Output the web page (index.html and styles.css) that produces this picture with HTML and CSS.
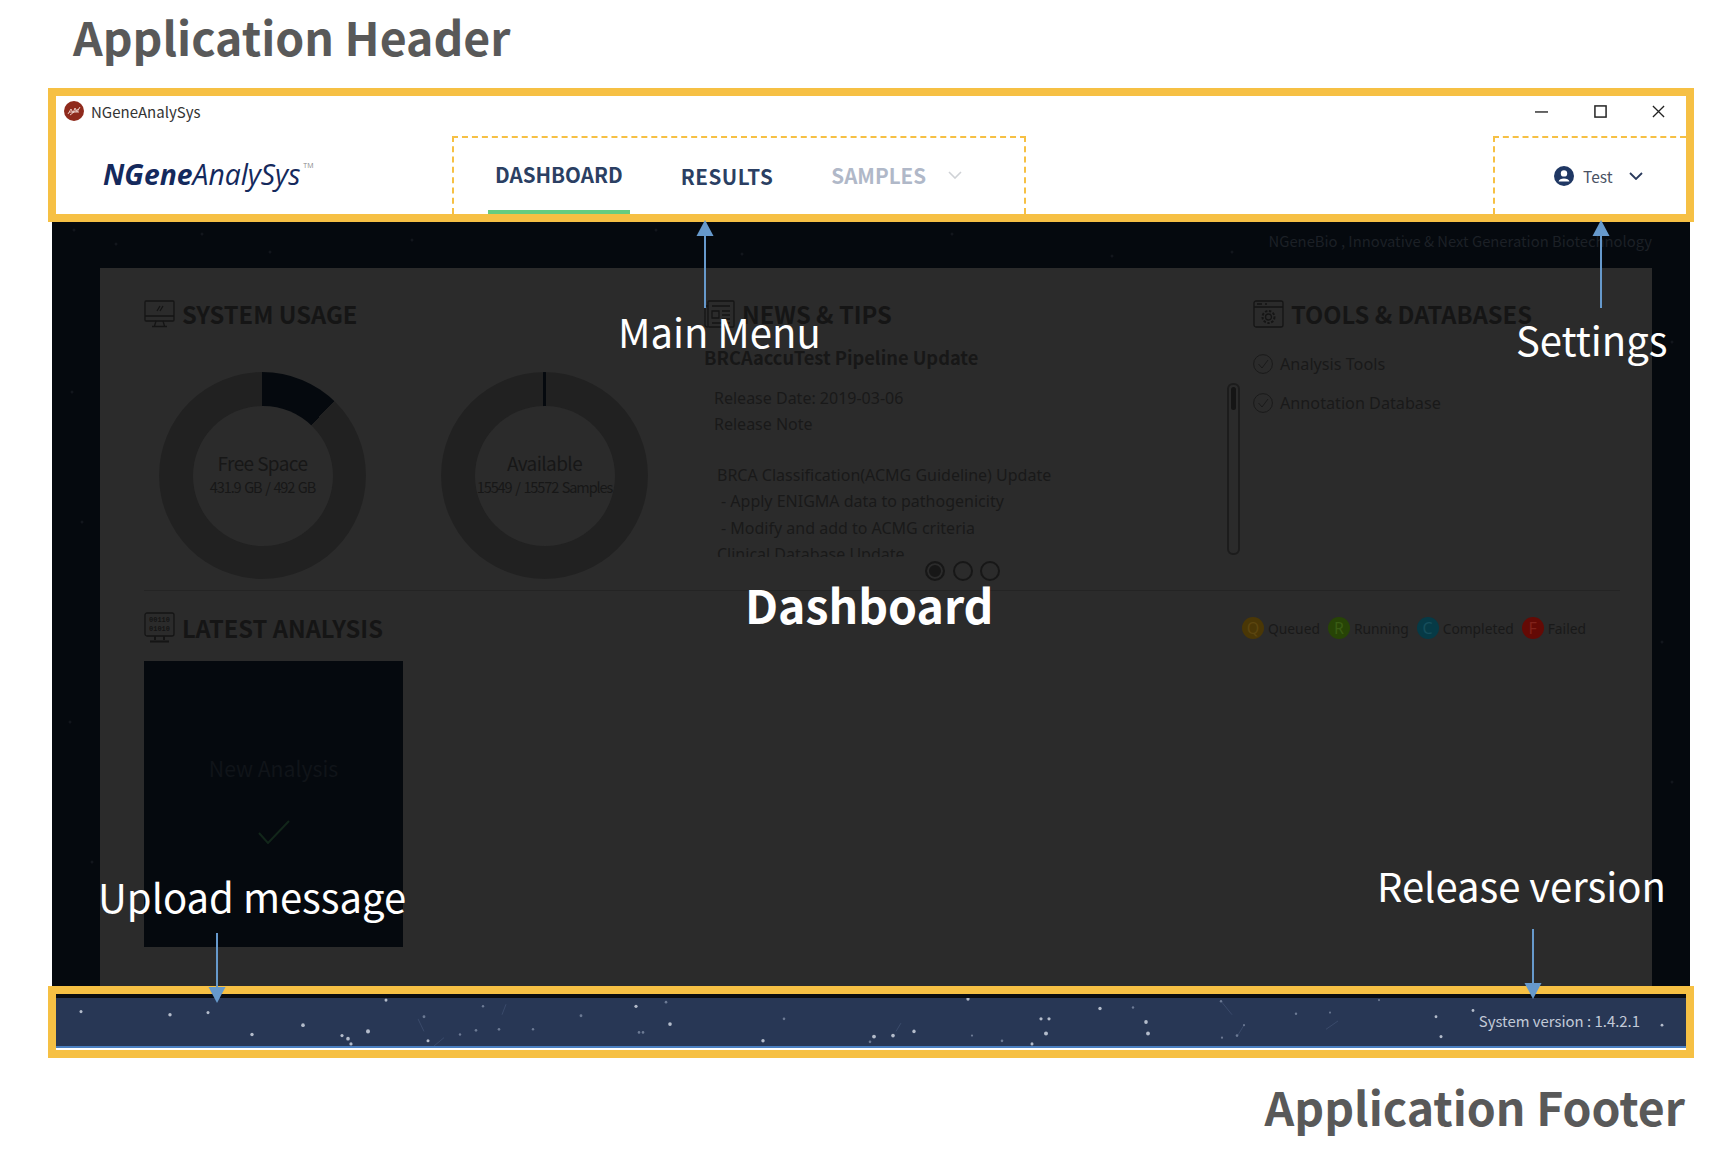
FILE: index.html
```html
<!DOCTYPE html>
<html lang="en">
<head>
  <meta charset="UTF-8" />
  <title>NGeneAnalySys - Application layout</title>
  <link rel="stylesheet" href="styles.css">
</head>
<body>
<div class="page">

  <h1 class="page-title">Application Header</h1>

  <!-- Application header -->
  <header class="app-header">
    <div class="titlebar">
      <div class="titlebar-name">
        <svg class="app-icon" viewBox="0 0 20 20">
          <circle cx="10" cy="10" r="10" fill="#8f2a1c"/>
          <path d="M4 13 L7 8 L9 12 L11 7 L13 11 L16 6 M5 11 H15 M6 14 C9 12 12 9 15 8" fill="none" stroke="#e9c9c2" stroke-width="1"/>
        </svg>
        <span>NGeneAnalySys</span>
      </div>
      <div class="window-btns">
        <svg viewBox="0 0 14 14"><path d="M0 7.5 H14" stroke="#333" stroke-width="1.6"/></svg>
        <svg viewBox="0 0 14 14"><rect x="1" y="1" width="12" height="12" fill="none" stroke="#222" stroke-width="1.6"/></svg>
        <svg viewBox="0 0 14 14"><path d="M1 1 L13 13 M13 1 L1 13" stroke="#222" stroke-width="1.4"/></svg>
      </div>
    </div>
    <div class="header-row">
      <div class="logo"><b>NGene</b>AnalySys<sup>TM</sup></div>
      <nav class="main-menu">
        <a href="#" class="active">DASHBOARD</a>
        <a href="#" class="results">RESULTS</a>
        <a href="#" class="disabled">SAMPLES
          <svg class="chevron" viewBox="0 0 14 8"><path d="M1 1 L7 7 L13 1" fill="none" stroke="#cfd2d6" stroke-width="1.6"/></svg>
        </a>
      </nav>
      <div class="settings">
        <svg class="avatar" viewBox="0 0 20 20">
          <circle cx="10" cy="10" r="10" fill="#1f3763"/>
          <circle cx="10" cy="7.4" r="3.2" fill="#fff"/>
          <path d="M4.6 15.5 C5 11.5 15 11.5 15.4 15.5 Z" fill="#fff"/>
        </svg>
        <span>Test</span>
        <svg class="chevron" viewBox="0 0 14 8"><path d="M1 1 L7 7 L13 1" fill="none" stroke="#2a3a5c" stroke-width="1.8"/></svg>
      </div>
    </div>
  </header>

  <!-- Dimmed dashboard -->
  <main class="dashboard">
    <svg class="sky" viewBox="0 0 1638 764">
      <g fill="#12161c">
        <circle cx="22" cy="8" r="1.5"/><circle cx="64" cy="22" r="1.5"/><circle cx="150" cy="12" r="1.5"/>
        <circle cx="218" cy="30" r="1.5"/><circle cx="360" cy="18" r="1.5"/><circle cx="604" cy="8" r="1.5"/>
        <circle cx="690" cy="32" r="1.5"/><circle cx="900" cy="12" r="1.5"/><circle cx="1060" cy="34" r="1.5"/>
        <circle cx="1180" cy="30" r="1.5"/><circle cx="1620" cy="120" r="1.5"/><circle cx="1610" cy="420" r="1.5"/>
        <circle cx="1620" cy="560" r="1.5"/><circle cx="1606" cy="660" r="1.5"/><circle cx="30" cy="300" r="1.5"/>
        <circle cx="18" cy="500" r="1.5"/><circle cx="40" cy="640" r="1.5"/><circle cx="20" cy="170" r="1.5"/>
      </g>
    </svg>
    <div class="tagline">NGeneBio , Innovative &amp; Next Generation Biotechnology</div>
    <div class="panel">
      <div class="top-grid">

        <section class="usage">
          <h2 class="section-title">
            <svg class="section-icon" viewBox="0 0 31 28" fill="none" stroke="#151515" stroke-width="1.3">
              <rect x="1" y="1" width="29" height="20" rx="1"/>
              <path d="M1 16 H30 M12 21 L10.5 26 M19 21 L20.5 26 M8 26.5 H23 M13 11 L16 6 M16 11 L19 6"/>
            </svg>
            SYSTEM USAGE
          </h2>
          <div class="donuts">
            <div class="donut donut-space">
              <div class="donut-hole">
                <div class="donut-label">Free Space</div>
                <div class="donut-sub">431.9 GB / 492 GB</div>
              </div>
            </div>
            <div class="donut donut-samples">
              <div class="donut-hole">
                <div class="donut-label">Available</div>
                <div class="donut-sub">15549 / 15572 Samples</div>
              </div>
            </div>
          </div>
        </section>

        <section class="news">
          <h2 class="section-title">
            <svg class="section-icon" viewBox="0 0 31 28" fill="none" stroke="#151515" stroke-width="1.3">
              <rect x="4" y="1" width="26" height="26" rx="1"/>
              <path d="M4 6 H1 V25 Q1 27 4 27 M8 6 H26 M8 11 H15 V18 H8 Z M18 11 H26 M18 15 H26 M18 19 H26 M8 23 H26"/>
            </svg>
            NEWS &amp; TIPS
          </h2>
          <h3 class="news-title">BRCAaccuTest Pipeline Update</h3>
          <div class="news-body">
            <p>Release Date: 2019-03-06</p>
            <p>Release Note</p>
            <p class="news-gap"></p>
            <p class="news-note">BRCA Classification(ACMG Guideline) Update</p>
            <p class="news-item">- Apply ENIGMA data to pathogenicity</p>
            <p class="news-item">- Modify and add to ACMG criteria</p>
            <p class="news-note">Clinical Database Update</p>
          </div>
          <div class="dots">
            <span class="dot on"></span><span class="dot"></span><span class="dot"></span>
          </div>
        </section>

        <section class="tools">
          <div class="scrollbar"><div class="scroll-thumb"></div></div>
          <div>
            <h2 class="section-title">
              <svg class="section-icon" viewBox="0 0 31 28" fill="none" stroke="#151515" stroke-width="1.3">
                <rect x="1" y="1" width="29" height="26" rx="2"/>
                <path d="M1 7 H30 M4 4 H9 M12 4 H14"/>
                <circle cx="15.5" cy="17" r="3"/>
                <circle cx="15.5" cy="17" r="6" stroke-dasharray="2.4 1.6" stroke-width="2"/>
              </svg>
              TOOLS &amp; DATABASES
            </h2>
            <ul class="tool-list">
              <li>
                <svg viewBox="0 0 20 20" fill="none" stroke="#1a1a1a"><circle cx="10" cy="10" r="9.4"/><path d="M5.5 10 L9 14 L15 6"/></svg>
                Analysis Tools
              </li>
              <li>
                <svg viewBox="0 0 20 20" fill="none" stroke="#1a1a1a"><circle cx="10" cy="10" r="9.4"/><path d="M5.5 10 L9 14 L15 6"/></svg>
                Annotation Database
              </li>
            </ul>
          </div>
        </section>
      </div>

      <section class="latest">
        <div class="latest-head">
          <h2 class="section-title">
            <svg class="section-icon" viewBox="0 0 31 32" fill="none" stroke="#151515" stroke-width="1.3">
              <rect x="1" y="1" width="29" height="23" rx="2"/>
              <path d="M11 24 V28 M20 24 V28 M6 29.5 H25" stroke-width="2"/>
              <text x="15.5" y="10" class="bits">00110</text>
              <text x="15.5" y="19" class="bits">01010</text>
            </svg>
            LATEST ANALYSIS
          </h2>
          <div class="legend">
            <span class="legend-item"><i class="badge queued">Q</i>Queued</span>
            <span class="legend-item"><i class="badge running">R</i>Running</span>
            <span class="legend-item"><i class="badge completed">C</i>Completed</span>
            <span class="legend-item"><i class="badge failed">F</i>Failed</span>
          </div>
        </div>
        <div class="new-card">
          <div>New Analysis</div>
          <svg viewBox="0 0 32 24"><path d="M1 13 L10 23 L31 1" fill="none" stroke="#12261a" stroke-width="2"/></svg>
        </div>
      </section>
    </div>
  </main>

  <!-- Application footer -->
  <footer class="app-footer">
    <div class="footer-bar">
      <svg class="stars" viewBox="0 0 1630 46" preserveAspectRatio="none">
        <g stroke="#3f4f70" fill="none" stroke-width="0.8">
          <path d="M362 20 L368 32 M388 38 L378 46 M450 6 L446 16 M1165 3 L1176 16 M1188 26 L1181 37 M1270 30 L1282 22 M840 32 L845 24"/>
        </g>
        <g fill="#b4bccb">
          <circle cx="25" cy="13" r="1.5"/><circle cx="114" cy="16" r="1.7"/><circle cx="152" cy="14" r="1.5"/>
          <circle cx="196" cy="35" r="1.7"/><circle cx="247" cy="26" r="1.8"/><circle cx="312" cy="32" r="2"/>
          <circle cx="286" cy="36" r="1.6"/><circle cx="292" cy="39" r="1.8"/><circle cx="295" cy="44" r="1.6"/>
          <circle cx="330" cy="2" r="1.5"/><circle cx="372" cy="41" r="1.5"/><circle cx="61" cy="48" r="1.4"/><circle cx="40" cy="50" r="1.5"/>
          <circle cx="580" cy="8" r="1.6"/><circle cx="614" cy="25" r="1.8"/><circle cx="707" cy="41" r="1.7"/>
          <circle cx="818" cy="37" r="1.9"/><circle cx="837" cy="36" r="1.8"/><circle cx="858" cy="32" r="1.7"/><circle cx="912" cy="1" r="1.6"/>
          <circle cx="985" cy="20" r="1.6"/><circle cx="993" cy="20" r="1.6"/><circle cx="990" cy="34" r="2"/>
          <circle cx="976" cy="44" r="1.5"/><circle cx="1044" cy="10" r="1.7"/><circle cx="1090" cy="23" r="1.8"/>
          <circle cx="1092" cy="34" r="1.9"/><circle cx="1380" cy="18" r="1.4"/>
          <circle cx="1385" cy="37" r="1.5"/><circle cx="1417" cy="12" r="1.4"/><circle cx="1606" cy="26" r="1.4"/>
        </g>
        <g fill="#6c7a94">
          <circle cx="368" cy="18" r="1.4"/><circle cx="420" cy="31" r="1.3"/><circle cx="404" cy="35" r="1.2"/>
          <circle cx="443" cy="30" r="1.3"/><circle cx="427" cy="8" r="1.2"/><circle cx="477" cy="30" r="1.2"/>
          <circle cx="525" cy="17" r="1.4"/><circle cx="610" cy="4" r="1.3"/><circle cx="583" cy="33" r="1.3"/>
          <circle cx="587" cy="33" r="1.3"/><circle cx="728" cy="20" r="1.3"/><circle cx="814" cy="42" r="1.3"/>
          <circle cx="946" cy="41" r="1.3"/><circle cx="916" cy="36" r="1.1"/><circle cx="1077" cy="9" r="1.2"/>
          <circle cx="1166" cy="38" r="1.1"/><circle cx="1181" cy="36" r="1.3"/><circle cx="1188" cy="26" r="1"/>
          <circle cx="1165" cy="3" r="1.2"/><circle cx="1240" cy="15" r="1.2"/><circle cx="1274" cy="14" r="1"/>
          <circle cx="1323" cy="2" r="1.1"/>
        </g>
      </svg>
      <span class="version">System version : 1.4.2.1</span>
    </div>
  </footer>

  <div class="page-caption">Application Footer</div>

  <!-- Annotations over the screenshot -->
  <div class="note note-menu">Main Menu</div>
  <div class="note note-settings">Settings</div>
  <div class="note note-dashboard">Dashboard</div>
  <div class="note note-upload">Upload message</div>
  <div class="note note-release">Release version</div>

  <svg class="arrow arrow-menu" viewBox="0 0 18 88"><path d="M9 16 V88" stroke="#6699cc" stroke-width="2"/><path d="M9 0 L17.500 16 H0.500 Z" fill="#6699cc"/></svg>
  <svg class="arrow arrow-settings" viewBox="0 0 18 88"><path d="M9 16 V88" stroke="#6699cc" stroke-width="2"/><path d="M9 0 L17.500 16 H0.500 Z" fill="#6699cc"/></svg>
  <svg class="arrow arrow-upload" viewBox="0 0 18 70"><path d="M9 0 V54" stroke="#6699cc" stroke-width="2"/><path d="M9 70 L17.500 54 H0.500 Z" fill="#6699cc"/></svg>
  <svg class="arrow arrow-release" viewBox="0 0 18 70"><path d="M9 0 V54" stroke="#6699cc" stroke-width="2"/><path d="M9 70 L17.500 54 H0.500 Z" fill="#6699cc"/></svg>

</div>
</body>
</html>
```

FILE: styles.css
```css
* {
  box-sizing: border-box;
}

body {
  margin: 0;
  background-color: white;
  font-family: "Noto Sans CJK KR", "Noto Sans", sans-serif;
}

.page {
  position: relative;
  width: 1728px;
  height: 1150px;
  overflow: hidden;
}

.page-title {
  margin: 0;
  height: 88px;
  padding: 5px 0 0 73px;
  font-size: 46.400px;
  line-height: 62px;
  font-weight: bold;
  color: #595959;
}

.page-caption {
  padding: 15px 43px 0 0;
  text-align: right;
  font-size: 46.400px;
  line-height: 66px;
  font-weight: bold;
  color: #595959;
}

/* Header */

.app-header {
  width: 1646px;
  height: 134px;
  margin-left: 48px;
  border: 8px solid #f6c044;
  background-color: white;
}

.titlebar {
  display: flex;
  justify-content: space-between;
  height: 40px;
  padding: 5px 21px 0 8px;
}

.titlebar-name {
  display: flex;
  align-items: flex-start;
  gap: 7px;
  font-size: 15px;
  line-height: 22px;
  color: #333;
}

.app-icon {
  width: 20px;
  height: 20px;
}

.window-btns {
  display: flex;
  gap: 45.500px;
  padding-top: 4px;
}

.window-btns svg {
  width: 13px;
  height: 13px;
}

.header-row {
  display: flex;
  height: 78px;
}

.logo {
  width: 396px;
  padding: 20px 0 0 47px;
  font-family: "Open Sans", sans-serif;
  font-style: italic;
  font-size: 28.300px;
  line-height: 36px;
  color: #14295c;
}

.logo sup {
  font-size: 7px;
  font-style: normal;
  line-height: 0;
  vertical-align: 17px;
  margin-left: 3px;
  color: #888;
}

.main-menu {
  display: flex;
  width: 574px;
  padding-left: 34px;
  border: 2px dashed #f6c044;
  border-bottom: none;
}

.main-menu a {
  display: flex;
  align-items: center;
  gap: 22px;
  height: 76px;
  padding: 0 7px;
  margin-right: 44px;
  font-size: 20.600px;
  font-weight: bold;
  color: #2b3f63;
  text-decoration: none;
}

.main-menu a.active {
  border-bottom: 4px solid #66cc80;
  padding-bottom: 0;
}

.main-menu a.results {
  letter-spacing: 0.500px;
}

.main-menu a.disabled {
  color: #b0b8c8;
  padding-bottom: 2px;
}

.chevron {
  width: 14px;
  height: 8px;
}

.settings {
  display: flex;
  align-items: center;
  gap: 9px;
  width: 193px;
  margin-left: auto;
  padding-left: 59px;
  border-top: 2px dashed #f6c044;
  border-left: 2px dashed #f6c044;
  font-size: 15.500px;
  color: #4a5264;
}

.settings .chevron {
  margin-left: 8px;
}

.avatar {
  width: 20px;
  height: 20px;
}

/* Dashboard */

.dashboard {
  position: relative;
  width: 1638px;
  height: 764px;
  margin-left: 52px;
  padding: 0 38px 0 48px;
  background-color: #05090e;
}

.sky {
  position: absolute;
  inset: 0;
  width: 100%;
  height: 100%;
}

.tagline {
  position: relative;
  height: 46px;
  padding-top: 6px;
  text-align: right;
  font-size: 14.800px;
  line-height: 26px;
  color: #1c2026;
}

.panel {
  position: relative;
  height: 718px;
  padding: 0 32px 0 44px;
  background-color: #2b2b2b;
}

.top-grid {
  display: grid;
  grid-template-columns: 560px 523px 1fr;
  height: 323px;
  border-bottom: 1px solid #242424;
}

.section-title {
  display: flex;
  align-items: center;
  gap: 7px;
  height: 34px;
  margin: 0;
  font-size: 23.700px;
  line-height: 32px;
  font-weight: bold;
  color: #151515;
  white-space: nowrap;
}

.section-icon {
  width: 31px;
  height: 28px;
  flex-shrink: 0;
}

.usage,
.news {
  padding-top: 29px;
}

.donuts {
  display: flex;
  gap: 75px;
  margin: 41px 0 0 15px;
}

.donut {
  display: flex;
  justify-content: center;
  align-items: center;
  width: 207px;
  height: 207px;
  border-radius: 50%;
}

.donut-space {
  background: conic-gradient(#05090e 0 44deg, #212121 44deg);
}

.donut-samples {
  background: conic-gradient(#05090e 0 1deg, #212121 1deg 359deg, #05090e 359deg);
}

.donut-hole {
  display: flex;
  flex-direction: column;
  align-items: center;
  justify-content: center;
  width: 140px;
  height: 140px;
  padding-bottom: 4px;
  border-radius: 50%;
  background-color: #2b2b2b;
  color: #171717;
  white-space: nowrap;
}

.donut-label {
  font-size: 19px;
  line-height: 26px;
  letter-spacing: -0.6px;
}

.donut-sub {
  font-size: 14.500px;
  line-height: 22px;
  letter-spacing: -1.1px;
  word-spacing: 1.500px;
}

.news {
  position: relative;
}

.news-title {
  margin: 13px 0 15px;
  height: 26px;
  font-size: 18.300px;
  line-height: 26px;
  font-weight: bold;
  color: #171717;
}

.news-body {
  height: 172px;
  padding-left: 10px;
  overflow: hidden;
  font-family: "Noto Sans", sans-serif;
  font-size: 16px;
  line-height: 26.400px;
  color: #191919;
}

.news-body p {
  margin: 0;
}

.news-body .news-gap {
  height: 24px;
}

.news-note {
  padding-left: 3px;
}

.news-item {
  padding-left: 7px;
}

.dots {
  display: flex;
  gap: 7.500px;
  margin: 4px 0 0 221px;
}

.dot {
  width: 20px;
  height: 20px;
  border: 2px solid #171717;
  border-radius: 50%;
}

.dot.on {
  background-color: #171717;
  box-shadow: inset 0 0 0 2px #2b2b2b;
}

.tools {
  display: flex;
  gap: 13px;
  padding-top: 29px;
}

.scrollbar {
  width: 13px;
  height: 172px;
  margin-top: 86px;
  padding: 2px;
  border: 2px solid #1c1c1c;
  border-radius: 6px;
}

.scroll-thumb {
  height: 23px;
  border-radius: 4px;
  background-color: #151515;
}

.tool-list {
  list-style: none;
  margin: 0;
  padding: 0;
}

.tool-list li {
  display: flex;
  align-items: center;
  gap: 7px;
  height: 39px;
  font-family: "Noto Sans", sans-serif;
  font-size: 16.200px;
  color: #191919;
}

.tool-list li:first-child {
  margin-top: 13px;
}

.tool-list svg {
  width: 20px;
  height: 20px;
}

.latest {
  padding-top: 20px;
}

.latest-head {
  display: flex;
  justify-content: space-between;
  align-items: center;
  height: 34px;
  padding-right: 34px;
}

.latest .section-icon {
  height: 32px;
}

.bits {
  font-family: "Liberation Mono", monospace;
  font-size: 7px;
  text-anchor: middle;
  fill: #151515;
  stroke: none;
}

.legend {
  display: flex;
  gap: 8px;
  font-family: "Noto Sans", sans-serif;
  font-size: 13.800px;
  color: #191919;
}

.legend-item {
  display: flex;
  align-items: center;
  gap: 4px;
}

.badge {
  display: flex;
  justify-content: center;
  align-items: center;
  width: 22px;
  height: 22px;
  border-radius: 50%;
  font-size: 16px;
  font-style: normal;
}

.badge.queued {
  background-color: #4a3706;
  color: #5c4610;
}

.badge.running {
  background-color: #274406;
  color: #3a5c14;
}

.badge.completed {
  background-color: #063a46;
  color: #164e5b;
}

.badge.failed {
  background-color: #640a05;
  color: #80221a;
}

.new-card {
  display: flex;
  flex-direction: column;
  align-items: center;
  width: 259px;
  height: 286px;
  margin-top: 16px;
  padding-top: 90px;
  background-color: #05090e;
  font-size: 21.200px;
  line-height: 34px;
  color: #101419;
}

.new-card svg {
  width: 32px;
  height: 24px;
  margin-top: 35px;
}

/* Footer */

.app-footer {
  position: relative;
  width: 1646px;
  height: 72px;
  margin-left: 48px;
  border: 8px solid #f6c044;
  background-color: white;
}

.footer-bar {
  position: relative;
  display: flex;
  justify-content: flex-end;
  align-items: center;
  height: 54px;
  padding: 0 46px 3px 0;
  border-top: 4px solid #0a0d12;
  border-bottom: 2px solid #4a7fc1;
  background-color: #283755;
}

.stars {
  position: absolute;
  left: 0;
  top: 0;
  width: 100%;
  height: 100%;
  filter: blur(0.700px);
}

.version {
  position: relative;
  font-size: 14.900px;
  color: #c2cad8;
}

/* Annotations */

.note {
  position: absolute;
  color: white;
  font-size: 40px;
  line-height: 56px;
  white-space: nowrap;
}

.note-menu {
  left: 618px;
  top: 303px;
}

.note-settings {
  left: 1516px;
  top: 311px;
}

.note-dashboard {
  left: 745px;
  top: 570px;
  font-size: 46.400px;
  line-height: 68px;
  font-weight: bold;
}

.note-upload {
  left: 98px;
  top: 868px;
}

.note-release {
  left: 1377px;
  top: 857px;
}

.arrow {
  position: absolute;
  width: 18px;
}

.arrow-menu {
  left: 696px;
  top: 220px;
  height: 88px;
}

.arrow-settings {
  left: 1592px;
  top: 220px;
  height: 88px;
}

.arrow-upload {
  left: 208px;
  top: 933px;
  height: 70px;
}

.arrow-release {
  left: 1524px;
  top: 929px;
  height: 70px;
}
```
